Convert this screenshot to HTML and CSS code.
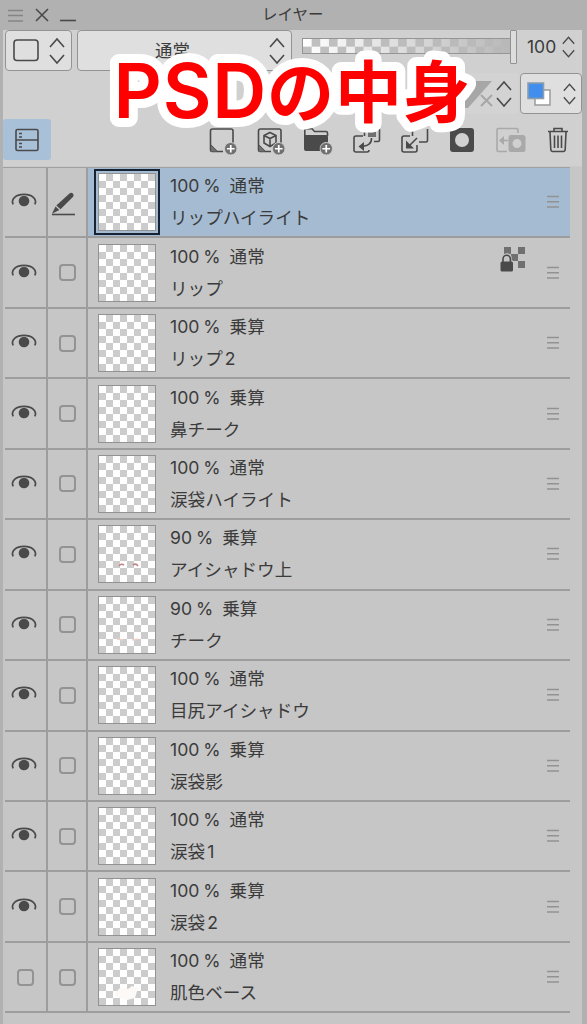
FILE: index.html
```html
<!DOCTYPE html>
<html lang="ja">

<head>
  <meta charset="UTF-8">
  <meta name="viewport" content="width=device-width, initial-scale=1.0">
  <title>レイヤー</title>
  <link rel="stylesheet" href="styles.css">
</head>

<body>
  <svg class="sprite" width="0" height="0">
    <symbol id="updown" viewBox="0 0 16 28">
      <path d="M1 10 8 2l7 8M1 18l7 8 7-8" />
    </symbol>
    <symbol id="eye" viewBox="0 0 26 16">
      <path d="M2.200 12.300C-.5 7 5 2.300 13 2.300s13.500 4.700 10.800 10" />
      <circle class="solid" cx="13" cy="9" r="5.300" />
    </symbol>
    <symbol id="pen" viewBox="0 0 26 26">
      <path d="M1 23.500h23" />
      <path class="solid" d="M18.500 2.500q1.800-1.600 3.400 0t0 3.400L9.500 18.300l-4.200-3.800zM4.500 15.500l3.800 3.600L1 22.800z" />
    </symbol>
    <symbol id="grip" viewBox="0 0 12 14">
      <path d="M0 1.500h12M0 6.700h12M0 12h12" />
    </symbol>
    <symbol id="alpha-lock" viewBox="0 0 26 26">
      <path class="checks" d="M4 0h7v7H4zM18 0h7v7h-7zM11 7h7v7h-7zM18 14h7v7h-7z" />
      <path class="halo" d="M2 14h1V11a4 4 0 0 1 8 0v3h1v10H1V14z" />
      <path d="M3 15v-3a3.700 3.700 0 0 1 7.400 0v3" />
      <rect class="solid" x=".5" y="14.500" width="12.500" height="10" rx="1.500" />
    </symbol>
    <symbol id="plus" viewBox="0 0 14 14">
      <circle class="badge" cx="7" cy="7" r="6.500" />
      <path class="cross" d="M7 3v8M3 7h8" />
    </symbol>
  </svg>

  <header class="titlebar">
    <svg class="menu" width="15" height="13"><path d="M0 1.500h15M0 6.500h15M0 12h15" /></svg>
    <svg class="close" width="14" height="14"><path d="M1 1l12 12M13 1 1 13" /></svg>
    <svg class="minimize" width="16" height="14"><path d="M0 12.500h16" /></svg>
    <h1>レイヤー</h1>
  </header>

  <main class="panel">
    <section class="controls">
      <div class="bar">
        <button class="box palette-color">
          <svg width="26" height="23"><rect x="1" y="1" width="24" height="20.500" rx="3" /></svg>
          <svg width="16" height="28"><use href="#updown" /></svg>
        </button>
        <button class="box blend">
          <span>通常</span>
          <svg width="16" height="28"><use href="#updown" /></svg>
        </button>
        <div class="opacity">
          <div class="track"></div>
          <div class="knob"></div>
        </div>
        <span class="value">100</span>
        <svg class="step" width="13" height="24" viewBox="0 0 16 28"><use href="#updown" /></svg>
      </div>

      <div class="bar second">
        <div class="ruler">
          <svg class="off" width="34" height="30"><path class="fill" d="M0 2h31L7 29H0z" /><path class="gap" d="M20 16l11 11M31 16 20 27" /><path d="M20 16l11 11M31 16 20 27" /></svg>
          <svg width="16" height="28"><use href="#updown" /></svg>
        </div>
        <button class="box layer-color">
          <svg width="24" height="24">
            <rect class="back" x="8" y="8" width="15" height="15" />
            <rect class="front" x="1" y="1" width="15.500" height="15.500" />
          </svg>
          <svg width="13" height="24" viewBox="0 0 16 28"><use href="#updown" /></svg>
        </button>
      </div>

      <div class="tools">
        <button class="active">
          <svg width="24" height="24"><rect x="1" y="1.500" width="22" height="21" rx="1.500" /><path d="M1 12h22M4 5.500h3M4 9h3M4 15.500h3M4 19h3" /></svg>
        </button>
        <svg class="tool first" width="30" height="30" viewBox="0 0 30 30">
          <path d="M15 25.500H9L2.500 19V5Q2.500 3 4.500 3h18.500Q25 3 25 5v13M2.500 19v5q0 1.500 1.500 1.500h5" />
          <path class="corner" d="M3 19.500l6 6H3z" />
          <use href="#plus" x="16" y="16" width="13.500" height="13.500" />
        </svg>
        <svg class="tool" width="30" height="30" viewBox="0 0 30 30">
          <path d="M15 25.500H9L2.500 19V5Q2.500 3 4.500 3h18.500Q25 3 25 5v13M2.500 19v5q0 1.500 1.500 1.500h5" />
          <path class="corner" d="M3 19.500l6 6H3z" />
          <path d="M14 6.500l6 3v7.500l-6 3.500-6-3.500V9.500zM8 9.500l6 3 6-3M14 12.500v8" />
          <use href="#plus" x="16" y="16" width="13.500" height="13.500" />
        </svg>
        <svg class="tool" width="30" height="30" viewBox="0 0 30 30">
          <path class="solid" d="M0 9h22q2 0 2 2v12q0 2-2 2H2q-2 0-2-2z" />
          <path d="M.8 9V4q0-1.200 1.200-1.200h6l2.500 2.700h11.500q1.500 0 1.500 1.500v3" />
          <use href="#plus" x="15.500" y="16" width="13.500" height="13.500" />
        </svg>
        <svg class="tool" width="30" height="30" viewBox="0 0 30 30">
          <path d="M11 10H4q-2 0-2 2v12q0 2 2 2h11q2 0 2-2M22 15.500h4q1.500 0 1.500-1.500V3M12.500 3v7" />
          <rect class="corner" x="16" y="3" width="8" height="8" />
          <path d="M19.500 12q.5 8-11 8.500" /><path class="solid" d="M6.500 20.500l5.500-4.500v9z" />
        </svg>
        <svg class="tool" width="30" height="30" viewBox="0 0 30 30">
          <path d="M10 10H4q-2 0-2 2v12q0 2 2 2h11q2 0 2-2v-5M12.500 3v7M19 16h7q1.500 0 1.500-1.500V3" />
          <path d="M17 12l-9 9" /><path class="solid" d="M6 14.500V22.500h8z" />
        </svg>
        <svg class="tool" width="30" height="30" viewBox="0 0 30 30">
          <path class="solid" fill-rule="evenodd" d="M4 2h19q3 0 3 3v18q0 3-3 3H5q-3 0-3-3V5q0-3 3-3M14 7a7 7 0 1 0 0 14 7 7 0 0 0 0-14" />
        </svg>
        <svg class="tool dim" width="30" height="30" viewBox="0 0 30 30">
          <path d="M11 25.500H2.500Q1 25.500 1 24V4q0-1.500 1.500-1.500h18Q22 2.500 22 4v3" />
          <path d="M4 14.500h8" /><path class="solid" d="M3 14.500 8 10v9z" />
          <path class="solid" fill-rule="evenodd" d="M14 9h13q2.500 0 2.500 2.500v12q0 2.500-2.500 2.500H15q-2.500 0-2.500-2.500v-12Q12.500 9 15 9m6 4a4.500 4.500 0 1 0 0 9 4.500 4.500 0 0 0 0-9" />
        </svg>
        <svg class="tool" width="30" height="30" viewBox="0 0 30 30">
          <path d="M4 5.500h20M10 5V2.500h8V5M6 6l.8 17.500q.2 2 2 2h10.400q1.800 0 2-2L22 6M10.500 9.500v12.500M14 9.500v12.500M17.500 9.500v12.500" />
        </svg>
      </div>
    </section>

    <section class="layers" id="layers"></section>
  </main>

  <svg class="caption" width="400" height="90" viewBox="0 0 400 90">
    <text y="75"><tspan class="latin" x="13.500" textLength="153" lengthAdjust="spacing">PSD</tspan><tspan class="kana" x="167 235 303" y="74">の中身</tspan></text>
  </svg>

  <script>
    const layers = [
      { opacity: 100, mode: '通常', name: 'リップハイライト', selected: true },
      { opacity: 100, mode: '通常', name: 'リップ', locked: true },
      { opacity: 100, mode: '乗算', name: 'リップ', number: 2 },
      { opacity: 100, mode: '乗算', name: '鼻チーク' },
      { opacity: 100, mode: '通常', name: '涙袋ハイライト' },
      { opacity: 90, mode: '乗算', name: 'アイシャドウ上', paint: 'shadow' },
      { opacity: 90, mode: '乗算', name: 'チーク', paint: 'cheek' },
      { opacity: 100, mode: '通常', name: '目尻アイシャドウ' },
      { opacity: 100, mode: '乗算', name: '涙袋影' },
      { opacity: 100, mode: '通常', name: '涙袋', number: 1 },
      { opacity: 100, mode: '乗算', name: '涙袋', number: 2 },
      { opacity: 100, mode: '通常', name: '肌色ベース', paint: 'skin', hidden: true }
    ]

    const paints = {
      shadow: '<path class="shadow" d="M20 40q2-3 5-1M34 39q3-2 5 1" />',
      cheek: '<path class="cheek" d="M18 42l6 1M33 43l6-1" />',
      skin: '<path class="skin" d="M16 44l6-6 7 2 4-3 6 2-3 10-8 2-8-2-4-2z" />'
    }

    const check = '<span class="check"></span>'
    const icon = (id, w, h) => `<svg class="${id}" width="${w}" height="${h}"><use href="#${id}" /></svg>`

    document.querySelector('#layers').innerHTML = layers.map(layer => `
      <div class="layer ${layer.selected ? 'selected' : ''}">
        <div class="cell">${layer.hidden ? check : icon('eye', 26, 16)}</div>
        <div class="cell">${layer.selected ? icon('pen', 26, 26) : check}</div>
        <div class="info">
          <div class="thumb"><svg width="56" height="56">${paints[layer.paint] || ''}</svg></div>
          <div class="label">
            <p><span class="percent">${layer.opacity} %</span>${layer.mode}</p>
            <p>${layer.name}${layer.number ? `<span class="number">${layer.number}</span>` : ''}</p>
          </div>
          ${layer.locked ? icon('alpha-lock', 26, 26) : ''}
          ${icon('grip', 12, 14)}
        </div>
      </div>`).join('')
  </script>
</body>

</html>
```
FILE: styles.css
```css
* {
  box-sizing: border-box;
}

body {
  margin: 0;
  height: 1024px;
  overflow: hidden;
  position: relative;
  background: #b1b1b1;
  color: #3b3b3b;
  font-family: Inter, "Noto Sans CJK JP", sans-serif;
}

svg {
  display: block;
  flex: none;
  fill: none;
  stroke: #4a4a4a;
  stroke-width: 1.6;
}

.sprite {
  position: absolute;
}

.solid {
  fill: #4a4a4a;
  stroke: none;
}

.titlebar {
  display: flex;
  align-items: center;
  height: 30px;
  padding-left: 8px;
}

.titlebar .menu {
  stroke: #858585;
}

.titlebar .close {
  margin-left: 12px;
}

.titlebar .minimize {
  margin: 0 0 0 11px;
}

.titlebar h1 {
  margin: 0 0 0 186px;
  font-size: 15.5px;
  font-weight: 400;
  line-height: 28px;
}

.panel {
  height: 994px;
  margin: 0 5px 0 3px;
  background: #c6c6c6;
}

.controls {
  height: 137px;
  background: #d0d0d0;
  border-bottom: 1px solid #cacaca;
}

.bar {
  display: flex;
  align-items: center;
  height: 41px;
  padding-left: 2px;
}

.box {
  display: flex;
  align-items: center;
  justify-content: space-between;
  height: 41px;
  padding: 0 6px 0 7px;
  border: 1px solid #939393;
  border-radius: 4px;
  background: #dfdfdf;
  font: inherit;
  color: inherit;
}

.palette-color {
  width: 67px;
}

.blend {
  width: 215px;
  margin-left: 5px;
  padding-left: 77px;
  font-size: 17.5px;
}

.blend span {
  line-height: 38px;
}

.opacity {
  display: flex;
  align-items: center;
  height: 34px;
  margin: -7px 0 0 10px;
}

.track {
  width: 209px;
  height: 16px;
  margin-top: -2px;
  border: 1px solid #959595;
  background:
    linear-gradient(90deg, #b8b8b800, #b8b8b8),
    repeating-conic-gradient(#c0c0c0 0 25%, #fff 0 50%) 0 -1px / 17.3px 17.3px;
}

.knob {
  width: 7px;
  height: 34px;
  margin-left: -1px;
  border: 1px solid #929292;
  border-radius: 1px;
  background: #ddd;
}

.value {
  width: 35px;
  margin: -9px 0 0 10px;
  font-size: 17.5px;
}

.step {
  margin-top: -1px;
  transform: translateY(-3px);
}

.second {
  margin-top: 2px;
  justify-content: flex-end;
}

.ruler {
  display: flex;
  align-items: center;
  gap: 1px;
  height: 41px;
  width: 230px;
  justify-content: flex-end;
  padding-right: 6px;
  margin-right: 2px;
  background: #d3d3d3;
}

.off {
  stroke: #a7a7a7;
  stroke-width: 2;
}

.off .fill {
  fill: #a7a7a7;
  stroke: none;
}

.off .gap {
  stroke: #d3d3d3;
  stroke-width: 6;
}

.layer-color {
  width: 62px;
  padding: 0 5px 0 6px;
}

.layer-color .back {
  fill: #fff;
  stroke: #a0a0a0;
}

.layer-color .front {
  fill: #418eec;
  stroke: #8e9ead;
}

.tools {
  display: flex;
  align-items: center;
  gap: 18px;
  height: 41px;
  margin-top: 5px;
}

.tool {
  position: relative;
  top: 1px;
}

.active {
  display: grid;
  place-items: center;
  width: 48px;
  height: 41px;
  padding: 0;
  border: 0;
  border-radius: 3px;
  background: #a8c0d8;
}

.first {
  margin-left: 139px;
}

.corner,
.badge,
.checks {
  fill: #707070;
  stroke: none;
}

.badge {
  stroke: #d0d0d0;
  stroke-width: 1;
}

.cross {
  stroke: #fff;
  stroke-width: 1.8;
}

.dim {
  stroke: #a9a9a9;
}

.dim .solid {
  fill: #a9a9a9;
}

.layers {
  width: 567px;
  padding-left: 2px;
  border-top: 1px solid #a0a0a0;
}

.layer {
  display: grid;
  grid-template-columns: 43px 40px 1fr;
  height: 70.45px;
  border-bottom: 2px solid #9d9d9d;
}

.cell {
  display: grid;
  place-items: center;
  border-right: 2px solid #9d9d9d;
}

.cell:first-child {
  padding-right: 3px;
}

.eye {
  stroke-width: 1.7;
  margin-top: -4px;
}

.pen {
  margin: 4px 6px 0 0;
}

.check {
  width: 17px;
  height: 17px;
  border: 2px solid #939393;
  border-radius: 4px;
}

.cell:first-child .check {
  margin-left: 2px;
}

.info {
  display: flex;
  align-items: center;
  padding: 0 11px 0 10px;
}

.thumb {
  width: 58px;
  height: 58px;
  padding: 0;
  border: 1px solid #929292;
  background: repeating-conic-gradient(#ccc 0 25%, #fff 0 50%) 0 0 / 14px 14px;
}

.selected .info {
  background: #a5bbd1;
}

.selected .thumb {
  outline: 2px solid #172333;
  outline-offset: 2px;
}

.shadow {
  stroke: #c58086;
}

.cheek {
  stroke: #f0d0cd;
}

.skin {
  fill: #fdf9f7;
  stroke: none;
}

.label {
  margin-left: 14px;
  margin-right: auto;
  font-size: 17.6px;
}

.label p {
  height: 32px;
  margin: 0;
  line-height: 32px;
  white-space: nowrap;
}

.percent {
  margin-right: 9px;
  word-spacing: -1px;
}

.number {
  margin-left: 2px;
}

.alpha-lock {
  margin: -25px 21px 0 0;
}

.halo {
  fill: #c6c6c6;
  stroke: #c6c6c6;
}

.grip {
  stroke: #929292;
  stroke-width: 1.5;
}

.caption {
  position: absolute;
  left: 100px;
  top: 43px;
  overflow: visible;
}

.caption text {
  fill: #f00;
  stroke: #fff;
  stroke-width: 18px;
  stroke-linejoin: round;
  paint-order: stroke;
}

.latin {
  font: 600 75px Inter, sans-serif;
}

.kana {
  font: 700 67px "Noto Sans CJK JP", sans-serif;
}
```
